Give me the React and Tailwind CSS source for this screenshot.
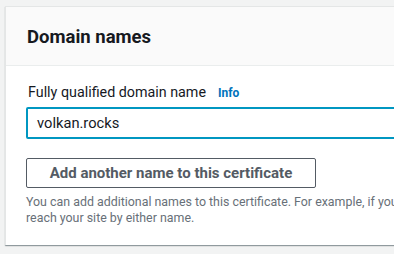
import React from 'react';

const App = () => {
    return (
        <div className="w-[394px] h-[254px] overflow-hidden bg-[#f2f3f3] pt-[6px] pl-[5px]" style={{ fontFamily: 'Roboto, "Noto Sans", Arial, sans-serif' }}>
            <div className="w-[420px] bg-white border-l border-t border-[#e4e6e6] shadow-[0_1px_1px_0_rgba(0,28,36,0.3),1px_1px_1px_0_rgba(0,28,36,0.15)]">
                <div className="h-[59px] bg-[#fafafa] border-b border-[#eaeded] pl-[21px] pt-[1px] flex items-center">
                    <h2 className="text-[18.5px] font-bold text-[#16191f] leading-[22px]">Domain names</h2>
                </div>
                <div className="pl-[20px] pt-[15px] pb-[19px]">
                    <div className="flex items-baseline gap-[12px] pl-[2px] h-[22px]">
                        <span className="text-[14.3px] text-[#16191f] leading-[22px]">Fully qualified domain name</span>
                        <span className="text-[12px] font-bold text-[#0073bb] leading-[22px]">Info</span>
                    </div>
                    <div className="mt-[4px] h-[32px] border-2 border-[#0097c1] rounded-[2px] flex items-center pl-[9px]">
                        <span className="text-[14.7px] text-[#16191f]">volkan.rocks</span>
                    </div>
                    <button className="mt-[19px] w-[290px] h-[30px] border border-[#545b64] rounded-[2px] bg-white text-[15px] font-bold text-[#545b64] flex items-center justify-center">
                        Add another name to this certificate
                    </button>
                    <div className="mt-[6px] text-[12.4px] leading-[16px] text-[#687078] whitespace-nowrap">
                        <p>You can add additional names to this certificate. For example, if you're requesting a certificate for "www.example.com", you might want to add "example.com" so that customers can</p>
                        <p>reach your site by either name.</p>
                    </div>
                </div>
            </div>
        </div>
    );
};

export default App;
